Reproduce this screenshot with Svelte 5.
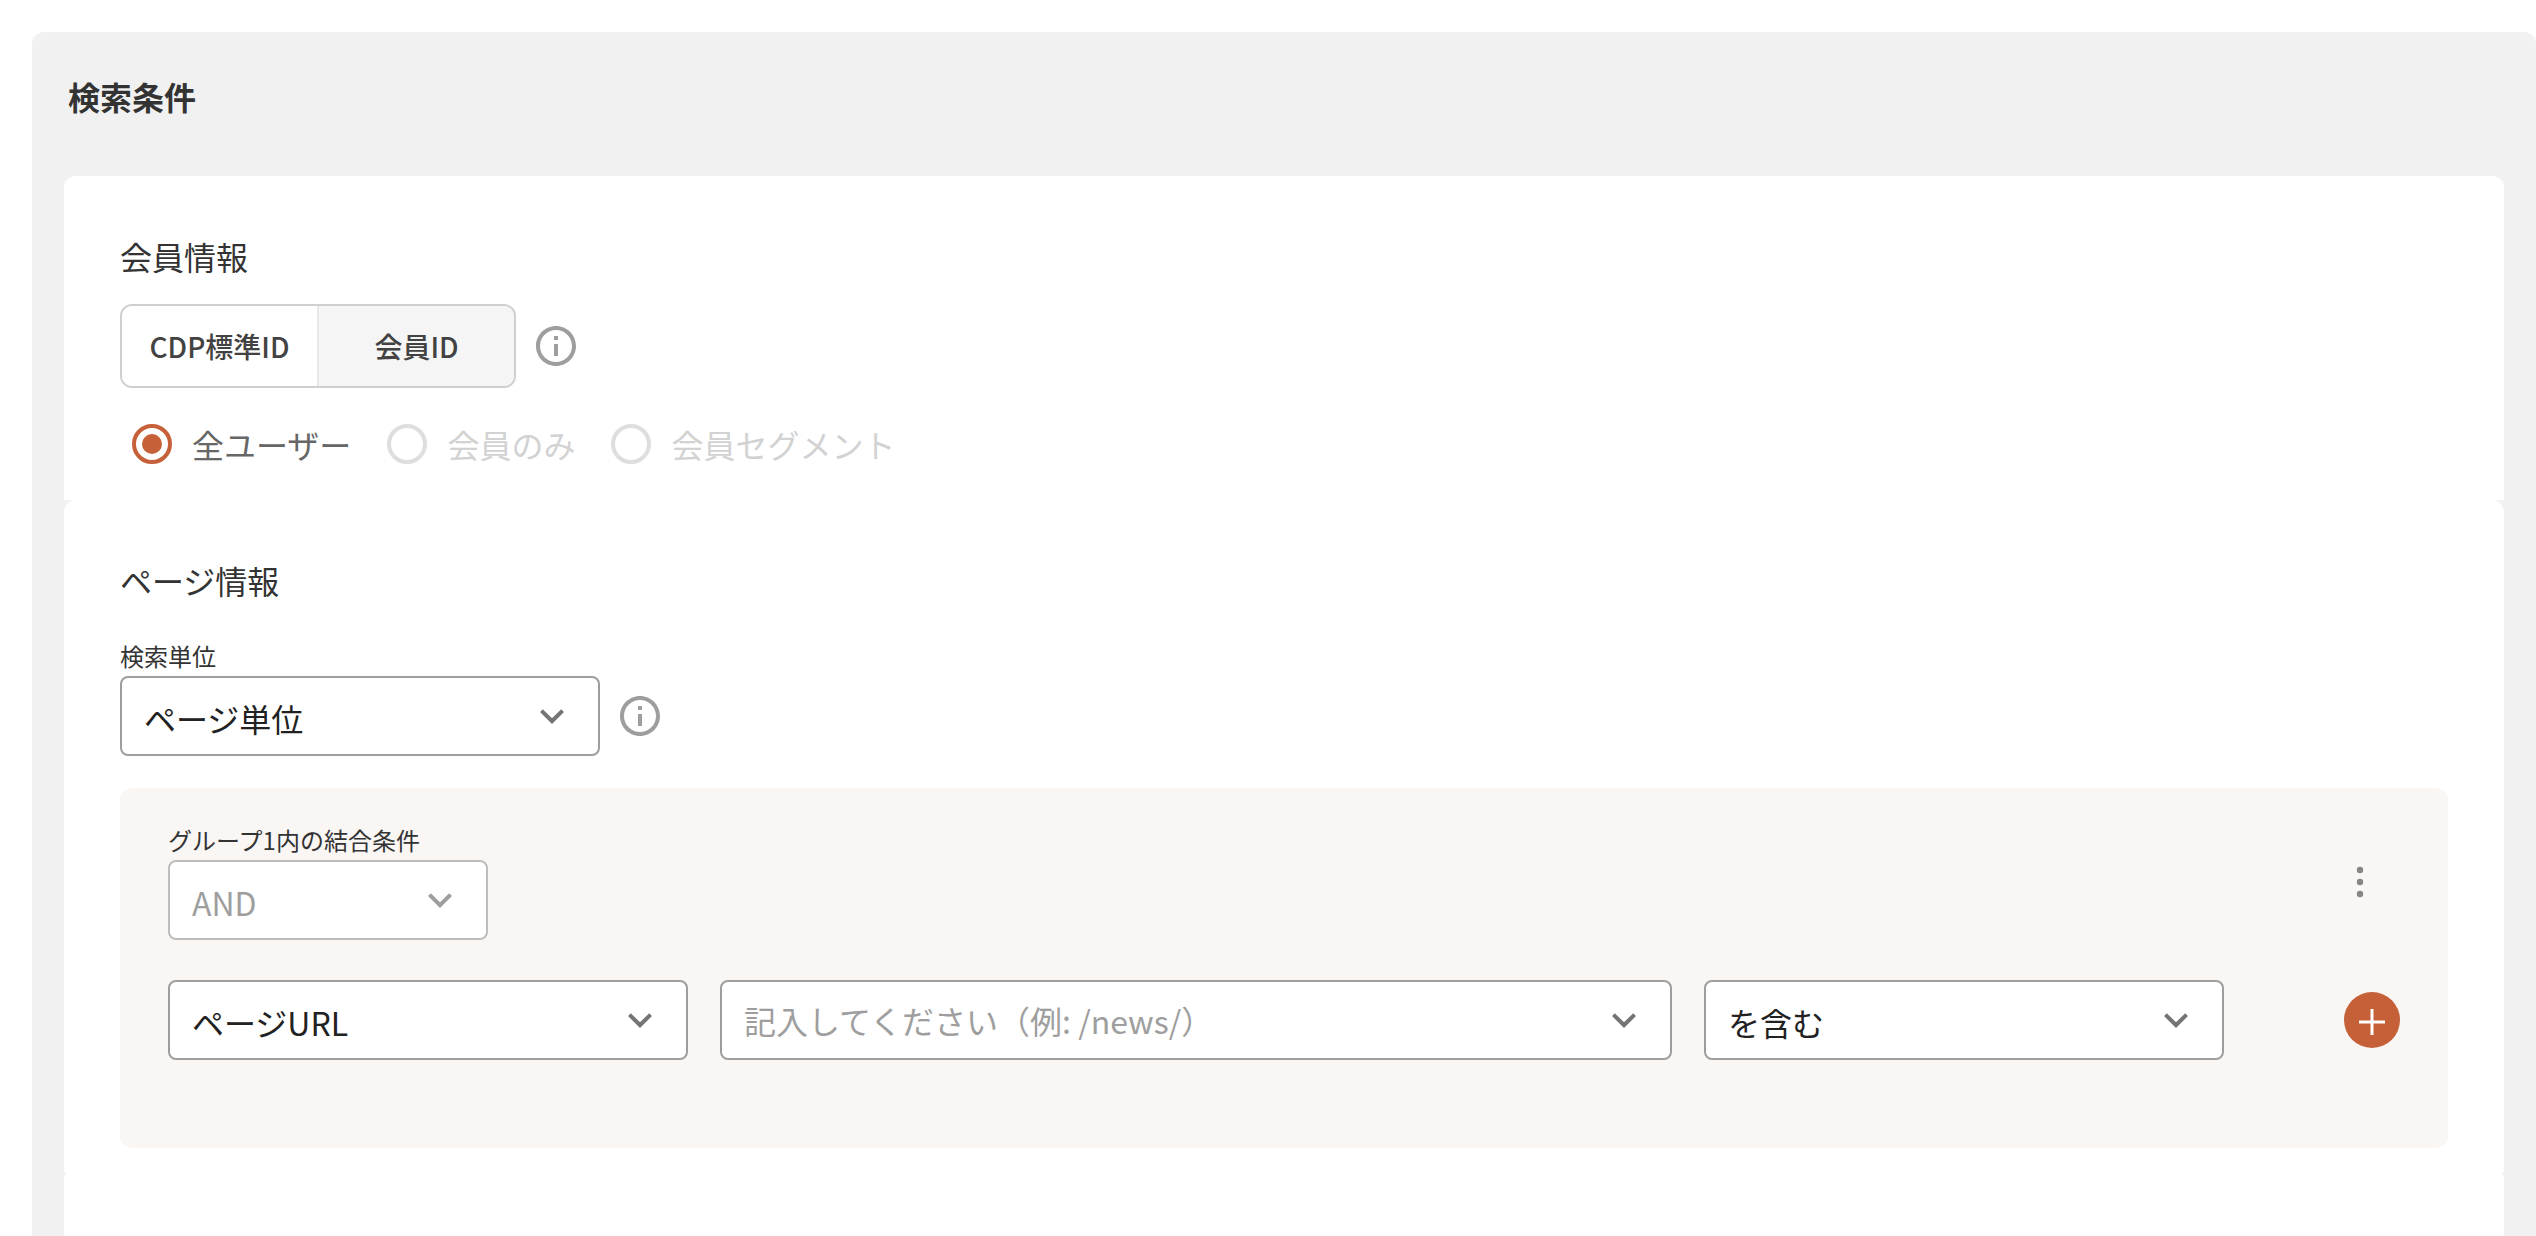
<script lang="ts">
  interface Option {
    value: string;
    label: string;
    disabled?: boolean;
  }

  const idTypes: Option[] = [
    { value: 'cdp', label: 'CDP標準ID' },
    { value: 'member', label: '会員ID' }
  ];

  const userScopes: Option[] = [
    { value: 'all', label: '全ユーザー' },
    { value: 'member', label: '会員のみ', disabled: true },
    { value: 'segment', label: '会員セグメント', disabled: true }
  ];

  let idType = $state('cdp');
  let userScope = $state('all');
  let unit = $state('page');
  let target = $state('url');
  let keyword = $state('');
  let matchType = $state('include');
</script>

{#snippet chevron()}
  <svg class="chevron" viewBox="0 0 24 24" aria-hidden="true">
    <path d="M16.59 8.59 12 13.17 7.41 8.59 6 10l6 6 6-6z" />
  </svg>
{/snippet}

{#snippet info()}
  <button type="button" class="icon-button info" aria-label="ヘルプ">
    <svg viewBox="0 0 24 24" aria-hidden="true">
      <path d="M11 7h2v2h-2zm0 4h2v6h-2zm1-9C6.48 2 2 6.48 2 12s4.48 10 10 10 10-4.48 10-10S17.52 2 12 2zm0 18c-4.41 0-8-3.59-8-8s3.59-8 8-8 8 3.59 8 8-3.59 8-8 8z" />
    </svg>
  </button>
{/snippet}

<main class="panel">
  <h1>検索条件</h1>

  <section class="card">
    <h2>会員情報</h2>
    <div class="inline">
      <div class="toggle" role="group" aria-label="会員情報">
        {#each idTypes as type}
          <button
            type="button"
            class:selected={idType === type.value}
            aria-pressed={idType === type.value}
            onclick={() => (idType = type.value)}
          >
            {type.label}
          </button>
        {/each}
      </div>
      {@render info()}
    </div>

    <div class="radios">
      {#each userScopes as scope}
        <label class="radio" class:disabled={scope.disabled}>
          <input
            type="radio"
            name="scope"
            value={scope.value}
            disabled={scope.disabled}
            bind:group={userScope}
          />
          {scope.label}
        </label>
      {/each}
    </div>
  </section>

  <section class="card page-card">
    <h2>ページ情報</h2>
    <div class="field unit-field">
      <label for="unit">検索単位</label>
      <div class="inline">
        <div class="select unit">
          <select id="unit" bind:value={unit}>
            <option value="page">ページ単位</option>
          </select>
          {@render chevron()}
        </div>
        {@render info()}
      </div>
    </div>

    <div class="group">
      <div class="group-header">
        <div class="field">
          <label for="join">グループ1内の結合条件</label>
          <div class="select join">
            <select id="join" disabled>
              <option>AND</option>
            </select>
            {@render chevron()}
          </div>
        </div>
        <button type="button" class="icon-button menu" aria-label="メニュー">
          <svg viewBox="0 0 24 24" aria-hidden="true">
            <circle cx="12" cy="6" r="1.6" />
            <circle cx="12" cy="12" r="1.6" />
            <circle cx="12" cy="18" r="1.6" />
          </svg>
        </button>
      </div>

      <div class="condition">
        <div class="select">
          <select aria-label="項目" bind:value={target}>
            <option value="url">ページURL</option>
          </select>
          {@render chevron()}
        </div>
        <div class="select">
          <input
            type="text"
            aria-label="値"
            placeholder="記入してください（例: /news/）"
            bind:value={keyword}
          />
          {@render chevron()}
        </div>
        <div class="select">
          <select aria-label="一致条件" bind:value={matchType}>
            <option value="include">を含む</option>
          </select>
          {@render chevron()}
        </div>
        <button type="button" class="add" aria-label="追加">
          <svg viewBox="0 0 56 56" aria-hidden="true">
            <path d="M28 17v26M15 30h26" />
          </svg>
        </button>
      </div>
    </div>
  </section>

  <section class="card rest"></section>
</main>

<style>
  :global(body) {
    margin: 0;
    background: #fff;
  }

  .panel {
    display: flex;
    flex-direction: column;
    box-sizing: border-box;
    min-height: calc(100vh - 32px);
    margin: 32px 0 0 32px;
    padding: 40px 32px 0;
    border-radius: 12px 12px 0 0;
    background: #f1f1f1;
    color: #333;
    font-family: 'Noto Sans CJK JP', sans-serif;
    font-size: 32px;
    line-height: 48px;
  }

  h1,
  h2 {
    margin: 0;
    font-size: 32px;
    line-height: 48px;
  }

  h1 {
    padding-left: 4px;
    margin-bottom: 56px;
    font-weight: 700;
  }

  h2 {
    margin-bottom: 24px;
    font-weight: 400;
  }

  button,
  input,
  select {
    box-sizing: border-box;
    margin: 0;
    font-family: inherit;
  }

  .card {
    padding: 56px 56px 32px;
    border-radius: 12px 12px 0 0;
    background: #fff;
  }

  .page-card {
    padding-bottom: 26px;
    border-radius: 12px 12px 4px 4px;
  }

  .rest {
    flex: 1;
    padding: 0;
    border-radius: 4px 4px 0 0;
  }

  .inline {
    display: flex;
    align-items: center;
    gap: 16px;
  }

  .icon-button {
    width: 48px;
    height: 48px;
    padding: 0;
    border: 0;
    background: none;
    cursor: pointer;
  }

  .icon-button svg {
    display: block;
    width: 48px;
    height: 48px;
  }

  .info {
    fill: #9e9e9e;
  }

  .toggle {
    display: flex;
    box-sizing: border-box;
    width: 396px;
    height: 84px;
    border: 2px solid #cfcfcf;
    border-radius: 12px;
    overflow: hidden;
  }

  .toggle button {
    flex: 1 1 0;
    padding: 0;
    border: 0;
    background: #f5f5f5;
    color: #424242;
    font-size: 28px;
    font-weight: 500;
    line-height: 40px;
    cursor: pointer;
  }

  .toggle button.selected {
    background: #fff;
  }

  .toggle button:first-child {
    border-right: 2px solid #e8e8e8;
  }

  .radios {
    display: flex;
    gap: 32px;
    margin-top: 32px;
    padding-left: 8px;
  }

  .radio {
    display: flex;
    align-items: center;
    gap: 20px;
    color: #666;
  }

  .radio input {
    appearance: none;
    display: grid;
    place-items: center;
    width: 40px;
    height: 40px;
    margin-left: 4px;
    border: 4px solid #c56038;
    border-radius: 50%;
  }

  .radio input:checked::before {
    content: '';
    width: 20px;
    height: 20px;
    border-radius: 50%;
    background: #c56038;
  }

  .radio.disabled {
    color: #d2d2d2;
  }

  .radio.disabled input {
    border-color: #dedede;
  }

  .unit-field {
    margin-top: 36px;
  }

  .field label {
    display: block;
    margin-bottom: 4px;
    font-size: 24px;
    line-height: 32px;
  }

  .select {
    position: relative;
    height: 80px;
  }

  .select select,
  .select input {
    appearance: none;
    display: block;
    width: 100%;
    height: 80px;
    padding: 0 84px 0 22px;
    border: 2px solid #9e9e9e;
    border-radius: 8px;
    outline: 0;
    background: #fff;
    color: #212121;
    font-size: 32px;
  }

  .select select {
    padding-top: 4px;
  }

  .select input::placeholder {
    color: #9e9e9e;
    opacity: 1;
  }

  .select select:disabled {
    border-color: #bdbdbd;
    color: #9e9e9e;
    opacity: 1;
  }

  .chevron {
    position: absolute;
    top: 16px;
    right: 24px;
    width: 48px;
    height: 48px;
    fill: #757575;
    pointer-events: none;
  }

  select:disabled + .chevron {
    fill: #9e9e9e;
  }

  .unit {
    width: 480px;
  }

  .join {
    width: 320px;
  }

  .group {
    margin-top: 32px;
    padding: 36px 48px 88px;
    border-radius: 12px;
    background: #f9f6f3;
  }

  .group-header {
    display: flex;
    align-items: center;
    justify-content: space-between;
    margin-bottom: 40px;
  }

  .menu {
    margin-right: 16px;
    fill: #858585;
  }

  .condition {
    display: grid;
    grid-template-columns: 520px 1fr 520px auto;
    align-items: center;
    gap: 32px;
  }

  .add {
    width: 56px;
    height: 56px;
    margin-left: 88px;
    padding: 0;
    border: 0;
    border-radius: 50%;
    background: #c56038;
    cursor: pointer;
  }

  .add svg {
    display: block;
    width: 56px;
    height: 56px;
    fill: none;
    stroke: #fff;
    stroke-width: 3;
  }
</style>
